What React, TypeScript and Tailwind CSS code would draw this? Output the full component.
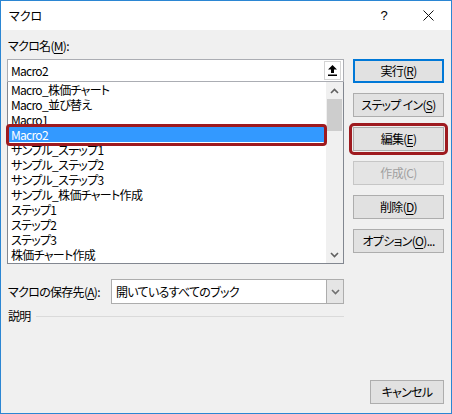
import React from 'react';

const macros = [
  'Macro_株価チャート',
  'Macro_並び替え',
  'Macro1',
  'Macro2',
  'サンプル_ステップ1',
  'サンプル_ステップ2',
  'サンプル_ステップ3',
  'サンプル_株価チャート作成',
  'ステップ1',
  'ステップ2',
  'ステップ3',
  '株価チャート作成',
];

const Chevron: React.FC<{ up?: boolean; color?: string }> = ({ up, color = '#606060' }) => (
  <svg width="9" height="6" viewBox="0 0 9 6">
    <polyline
      points={up ? '1,5 4.5,1.5 8,5' : '1,1 4.5,4.5 8,1'}
      fill="none"
      stroke={color}
      strokeWidth="1.6"
    />
  </svg>
);

// underline on the access key letter
const Key: React.FC<{ k: string }> = ({ k }) => <span className="underline underline-offset-2">{k}</span>;

const Btn: React.FC<{ children: React.ReactNode; kind?: 'default' | 'disabled'; className?: string }> = ({
  children,
  kind,
  className = '',
}) => {
  const look =
    kind === 'default'
      ? 'border-2 border-[#0078d7] bg-[#e1e1e1] text-black'
      : kind === 'disabled'
        ? 'border border-[#c6c6c6] bg-[#e4e4e4] text-[#a0a0a0]'
        : 'border border-[#adadad] bg-[#e1e1e1] text-black';
  return (
    <div className={`relative h-[24px] flex items-center justify-center whitespace-nowrap text-[12px] ${look} ${className}`}>
      {children}
    </div>
  );
};

export default function App() {
  return (
    <div className="w-[452px] h-[414px] border border-[#2b86d3] flex flex-col bg-[#f0f0f0] text-black font-[Noto_Sans_CJK_JP,sans-serif] [font-feature-settings:'palt'] text-[12px] tracking-[-0.7px] select-none">
      {/* Title bar */}
      <div className="h-[29px] bg-white flex items-center shrink-0">
        <span className="pl-[8px] text-[12px] tracking-normal">マクロ</span>
        <span className="ml-auto mr-[36px] text-[13px] font-[Liberation_Sans,sans-serif]">?</span>
        <svg width="11" height="11" viewBox="0 0 11 11" className="mr-[17px]">
          <path d="M0.5 0.5 L10.5 10.5 M10.5 0.5 L0.5 10.5" stroke="#111" strokeWidth="1" />
        </svg>
      </div>

      {/* Body */}
      <div className="flex-1 flex flex-col pl-[6px] pr-[7px] pt-[7px] pb-[9px]">
        <div className="h-[18px] leading-[18px] pl-[1px]">
          マクロ名(<Key k="M" />):
        </div>

        <div className="flex gap-[9px] mt-[4px]">
          {/* Left: name + list */}
          <div className="w-[337px] flex flex-col">
            <div className="h-[23px] border border-[#abadb3] bg-white flex items-center">
              <span className="pl-[3px] flex-1">Macro2</span>
              <div className="w-[17px] h-[19px] mr-[2px] border border-[#d4d4d4] bg-white flex items-center justify-center">
                <svg width="9" height="11" viewBox="0 0 9 11">
                  <path d="M4.5 0 L9 4.5 H6 V8 H3 V4.5 H0 Z" fill="#000" />
                  <rect x="0" y="9.5" width="9" height="1.5" fill="#000" />
                </svg>
              </div>
            </div>
            <div className="h-[182px] border border-t-0 border-[#828790] bg-white flex">
              <div className="flex-1 flex flex-col relative">
                {macros.map((m) => {
                  const sel = m === 'Macro2';
                  return (
                    <div
                      key={m}
                      className={`h-[15px] leading-[15px] pl-[3px] whitespace-nowrap ${sel ? 'bg-[#3399ff] text-white' : ''}`}
                    >
                      {m}
                    </div>
                  );
                })}
                {/* red annotation around selected item */}
                <div className="absolute left-[-2px] right-[-1px] top-[42px] h-[22px] border-[3px] border-[#9e1a1f] rounded-[4px] z-10" />
              </div>
              {/* scrollbar */}
              <div className="w-[17px] flex flex-col bg-[#f0f0f0]">
                <div className="h-[17px] flex items-center justify-center">
                  <Chevron up />
                </div>
                <div className="h-[32px] mx-[1px] bg-[#cdcdcd]" />
                <div className="flex-1" />
                <div className="h-[17px] flex items-center justify-center">
                  <Chevron />
                </div>
              </div>
            </div>
          </div>

          {/* Right: buttons */}
          <div className="w-[91px] flex flex-col gap-[10px]">
            <Btn kind="default">
              実行(<Key k="R" />)
            </Btn>
            <Btn>
              ステップ イン(<Key k="S" />)
            </Btn>
            <Btn>
              編集(<Key k="E" />)
              <div className="absolute -inset-[5px] border-[3px] border-[#9e1a1f] rounded-[5px]" />
            </Btn>
            <Btn kind="disabled">作成(C)</Btn>
            <Btn>
              削除(<Key k="D" />)
            </Btn>
            <Btn>
              オプション(<Key k="O" />)...
            </Btn>
          </div>
        </div>

        {/* Save location */}
        <div className="w-[337px] flex items-center mt-[15px] h-[25px]">
          <span className="flex-1 pl-[1px]">
            マクロの保存先(<Key k="A" />):
          </span>
          <div className="w-[233px] h-[25px] border border-[#adadad] bg-white flex items-center">
            <span className="flex-1 pl-[4px]">開いているすべてのブック</span>
            <div className="w-[17px] h-full border-l border-[#adadad] bg-[#e5e5e5] flex items-center justify-center">
              <Chevron color="#707070" />
            </div>
          </div>
        </div>

        {/* Description */}
        <div className="w-[337px] flex items-center mt-[3px] h-[18px]">
          <span className="pl-[1px]">説明</span>
          <div className="flex-1 h-px bg-[#dadada] ml-[5px]" />
        </div>

        <div className="mt-auto flex justify-end">
          <Btn className="w-[74px]">キャンセル</Btn>
        </div>
      </div>
    </div>
  );
}
